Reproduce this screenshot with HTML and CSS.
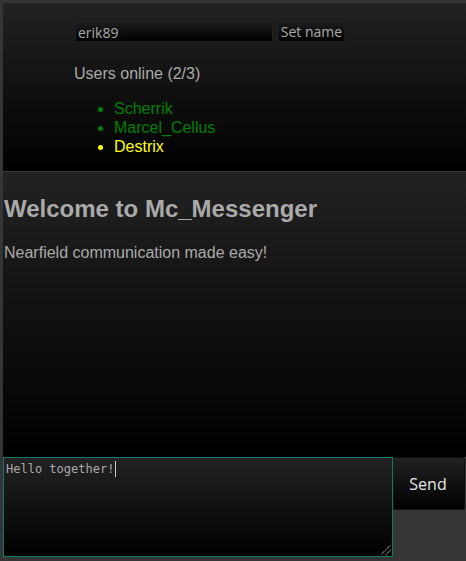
FILE: index.html
```html
<!DOCTYPE html>
<html>
<head>
<meta charset="utf-8">
<link rel="stylesheet" href="styles.css">
</head>
<body>
<div class="app">
  <header class="top">
    <div class="name-row">
      <input class="name-input" type="text" value="erik89">
      <button class="name-btn">Set name</button>
    </div>
    <div class="users-title">Users online (2/3)</div>
    <ul class="users">
      <li class="online">Scherrik</li>
      <li class="online">Marcel_Cellus</li>
      <li class="me">Destrix</li>
    </ul>
  </header>
  <main class="chat">
    <h2 class="welcome">Welcome to Mc_Messenger</h2>
    <p class="tagline">Nearfield communication made easy!</p>
  </main>
  <footer class="compose">
    <div class="msg">Hello together!<span class="caret"></span><span class="grip"></span></div>
    <button class="send">Send</button>
  </footer>
</div>
</body>
</html>
```
FILE: styles.css
```css
html, body {
  margin: 0;
  padding: 0;
  background: #353535;
  height: 561px;
  overflow: hidden;
}
.app {
  padding: 3px 0 0 3px;
  display: flex;
  flex-direction: column;
  font-family: "Liberation Sans", Arial, sans-serif;
  color: #aaaaaa;
}
.top {
  height: 168px;
  box-sizing: border-box;
  background: linear-gradient(#222222, #000000);
  padding: 19px 0 0 72px;
}
.name-row {
  display: flex;
  gap: 5px;
  height: 20px;
}
.name-input {
  width: 198px;
  height: 20px;
  box-sizing: border-box;
  border: 1px solid #1e1e1e;
  border-radius: 2px;
  background: linear-gradient(#1c1c1c, #000000);
  color: #aaaaaa;
  font-family: "Open Sans", sans-serif;
  font-size: 14px;
  padding: 0 2px;
  margin: 0;
  outline: none;
}
.name-btn {
  width: 67px;
  height: 20px;
  box-sizing: border-box;
  border: 1px solid #1e1e1e;
  border-radius: 2px;
  background: linear-gradient(#1c1c1c, #000000);
  color: #aaaaaa;
  font-family: "Open Sans", sans-serif;
  font-size: 14px;
  padding: 0;
  margin: 0;
  line-height: 16px;
}
.users-title {
  font-size: 16px;
  line-height: 19px;
  margin: 22px 0 0 -1px;
}
.users {
  margin: 16px 0 0 0;
  padding: 0 0 0 39px;
  font-size: 16px;
  line-height: 19px;
}
.users .online { color: #008000; }
.users .me { color: #ffff00; }
.chat {
  margin-top: 1px;
  height: 285px;
  box-sizing: border-box;
  background: linear-gradient(#222222, #000000);
  padding: 1px 0 0 1px;
}
.welcome {
  font-size: 24px;
  font-weight: bold;
  margin: 22px 0 0 0;
  color: #aaaaaa;
}
.tagline {
  font-size: 16px;
  margin: 21px 0 0 0;
}
.compose {
  display: flex;
  align-items: flex-start;
}
.msg {
  position: relative;
  width: 390px;
  height: 100px;
  box-sizing: border-box;
  border: 1px solid #0f7a6c;
  background: linear-gradient(#222222, #000000);
  font-family: "DejaVu Sans Mono", monospace;
  font-size: 12px;
  color: #aaaaaa;
  padding: 3px 2px;
  line-height: 16px;
}
.caret {
  display: inline-block;
  width: 1px;
  height: 16px;
  background: #cccccc;
  vertical-align: top;
  margin-left: 1px;
}
.grip {
  position: absolute;
  right: 1px;
  bottom: 1px;
  width: 10px;
  height: 10px;
  background: linear-gradient(135deg, transparent 45%, #555 45%, #555 52%, transparent 52%, transparent 70%, #555 70%, #555 77%, transparent 77%);
}
.send {
  margin: 0 0 0 -2px;
  width: 74px;
  height: 53px;
  border: 1px solid #111;
  border-radius: 2px;
  background: linear-gradient(#222222, #000000);
  color: #e6e6e6;
  font-family: "Open Sans", sans-serif;
  font-size: 16px;
}
```
